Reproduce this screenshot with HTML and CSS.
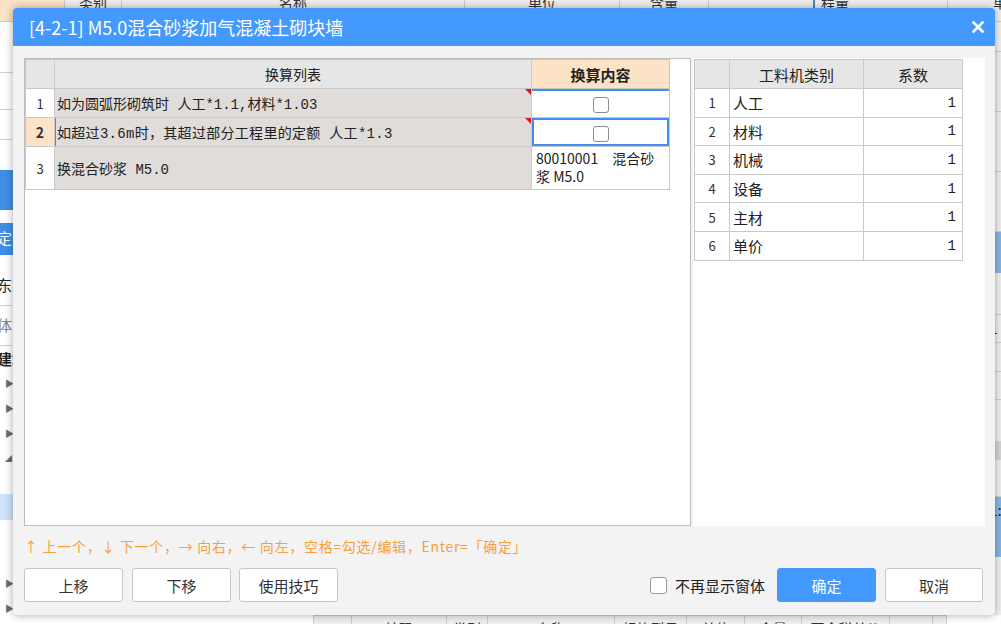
FILE: index.html
```html
<!DOCTYPE html>
<html lang="zh-CN">
<head>
<meta charset="utf-8">
<title>换算</title>
<link rel="stylesheet" href="styles.css">
</head>
<body>
<div class="app">
  <div class="app-head">
    <div class="ah ah-corner"></div>
    <div class="ah ah-type">类别</div>
    <div class="ah ah-name">名称</div>
    <div class="ah ah-unit">单位</div>
    <div class="ah ah-qty">含量</div>
    <div class="ah ah-amt">工程量</div>
    <div class="ah ah-price">单价</div>
  </div>
  <div class="app-mid">
    <div class="side">
      <div class="s-row s-orange"></div>
      <div class="s-row s-h50"></div>
      <div class="s-row s-h36"></div>
      <div class="s-row s-h30"></div>
      <div class="s-row s-h30 s-plain"></div>
      <div class="s-blue s-h40"></div>
      <div class="s-gap13"></div>
      <div class="s-blue s-h32 s-txt">定额</div>
      <div class="s-gap11"></div>
      <div class="s-row s-h40 s-txt s-dark">东管</div>
      <div class="s-row s-h40 s-txt s-grey">体系</div>
      <div class="s-row s-h25 s-txt s-bold s-plain">建筑</div>
      <div class="s-tri">▶</div>
      <div class="s-tri">▶</div>
      <div class="s-tri">▶</div>
      <div class="s-tri s-small">◢</div>
      <div class="s-gap23"></div>
      <div class="s-light"></div>
      <div class="s-gap51"></div>
      <div class="s-tri">▶</div>
      <div class="s-tri">▶</div>
    </div>
    <div class="center"></div>
    <div class="rstrip">
      <div class="r-row r-h30"></div>
      <div class="r-row r-h60"></div>
      <div class="r-row r-h60"></div>
      <div class="r-row r-h60"></div>
      <div class="r-blue r-h40"></div>
      <div class="r-row r-h42"></div>
      <div class="r-row r-h28 r-num">1</div>
      <div class="r-row r-h29"></div>
      <div class="r-row r-h28"></div>
      <div class="r-plain r-h41"></div>
      <div class="r-band"></div>
      <div class="r-row r-h37"></div>
      <div class="r-blue r-h60 r-num">1:</div>
    </div>
  </div>
  <div class="app-foot">
    <div class="af af-0"></div>
    <div class="af af-code">编码</div>
    <div class="af af-type">类别</div>
    <div class="af af-name">名称</div>
    <div class="af af-spec">规格型号</div>
    <div class="af af-unit">单位</div>
    <div class="af af-qty">含量</div>
    <div class="af af-price">不含税单价</div>
    <div class="af af-x"></div>
    <div class="af af-y"></div>
  </div>
</div>

<div class="dialog">
  <div class="dlg-title">
    <span class="dlg-caption">[4-2-1] M5.0混合砂浆加气混凝土砌块墙</span>
    <svg class="dlg-close" width="12" height="12" viewBox="0 0 12 12" aria-label="关闭">
      <path d="M1.5 1.5 L10.5 10.5 M10.5 1.5 L1.5 10.5" stroke="#ffffff" stroke-width="2.6" stroke-linecap="square" fill="none"/>
    </svg>
  </div>
  <div class="dlg-body">
    <div class="panels">
      <div class="panel panel-left">
        <table class="grid grid-left">
          <colgroup><col class="lc-num"><col class="lc-name"><col class="lc-val"></colgroup>
          <thead>
            <tr class="hrow">
              <th class="hnum"></th>
              <th>换算列表</th>
              <th class="hcur">换算内容</th>
            </tr>
          </thead>
          <tbody>
            <tr class="brow">
              <td class="num">1</td>
              <td class="desc"><span class="dtext">如为圆弧形砌筑时 人工*1.1,材料*1.03</span><i class="flag"></i></td>
              <td class="val val-top"><span class="box"></span></td>
            </tr>
            <tr class="brow">
              <td class="num num-cur">2</td>
              <td class="desc desc-cur"><span class="dtext">如超过3.6m时，其超过部分工程里的定额 人工*1.3</span><i class="flag"></i></td>
              <td class="val val-sel"><span class="box"></span></td>
            </tr>
            <tr class="brow brow-tall">
              <td class="num">3</td>
              <td class="desc"><span class="dtext">换混合砂浆 M5.0</span></td>
              <td class="val val-text">80010001　混合砂浆 M5.0</td>
            </tr>
          </tbody>
        </table>
      </div>
      <div class="panel panel-right">
        <table class="grid grid-right">
          <colgroup><col class="rc-num"><col class="rc-name"><col class="rc-val"></colgroup>
          <thead>
            <tr class="hrow"><th class="hnum"></th><th>工料机类别</th><th>系数</th></tr>
          </thead>
          <tbody>
            <tr class="rrow"><td class="num">1</td><td class="cat">人工</td><td class="coef">1</td></tr>
            <tr class="rrow"><td class="num">2</td><td class="cat">材料</td><td class="coef">1</td></tr>
            <tr class="rrow"><td class="num">3</td><td class="cat">机械</td><td class="coef">1</td></tr>
            <tr class="rrow"><td class="num">4</td><td class="cat">设备</td><td class="coef">1</td></tr>
            <tr class="rrow"><td class="num">5</td><td class="cat">主材</td><td class="coef">1</td></tr>
            <tr class="rrow"><td class="num">6</td><td class="cat">单价</td><td class="coef">1</td></tr>
          </tbody>
        </table>
      </div>
    </div>
    <div class="hint">↑ 上一个，↓ 下一个，→ 向右，← 向左，空格=勾选/编辑，Enter=「确定」</div>
    <div class="actions">
      <div class="btn-group">
        <button class="btn">上移</button>
        <button class="btn btn-down">下移</button>
        <button class="btn">使用技巧</button>
      </div>
      <div class="btn-group btn-group-right">
        <label class="chk-label"><span class="chk"></span>不再显示窗体</label>
        <button class="btn btn-primary">确定</button>
        <button class="btn btn-cancel">取消</button>
      </div>
    </div>
  </div>
</div>
</body>
</html>
```

FILE: styles.css
```css
* { box-sizing: border-box; margin: 0; padding: 0; }

body {
  width: 1001px;
  height: 624px;
  overflow: hidden;
  position: relative;
  background: #ffffff;
  font-family: "Noto Sans CJK SC", sans-serif;
  font-size: 13px;
  color: #222;
}

/* ---------- background application ---------- */
.app { display: flex; flex-direction: column; }

.app-head {
  display: flex;
  flex: none;
  height: 32px;
  margin-top: -10px;
  background: #efefef;
  border-bottom: 1px solid #cfcfcf;
}
.ah {
  flex: none;
  border-right: 1px solid #cdcdcd;
  text-align: center;
  line-height: 24px;
  font-size: 14px;
  color: #333;
}
.ah-corner { width: 65px; background: #fbe3c7; }
.ah-type { width: 57px; }
.ah-name { width: 343px; }
.ah-unit { width: 155px; }
.ah-qty { width: 89px; }
.ah-amt { width: 239px; }
.ah-price { width: 100px; text-align: left; padding-left: 45px; border-right: 0; }

.app-mid { display: flex; height: 593px; flex: none; }
.side { width: 40px; flex: none; display: flex; flex-direction: column; background: #fff; }
.s-row { border-bottom: 1px solid #cfcfcf; flex: none; }
.s-plain { border-bottom: 0; }
.s-orange { height: 0; border: 0; }
.s-h50 { height: 51px; }
.s-h36 { height: 37px; }
.s-h30 { height: 30px; }
.s-h40 { height: 40px; }
.s-h32 { height: 32px; }
.s-h25 { height: 25px; }
.s-blue { background: #3f8fe5; flex: none; }
.s-gap13 { height: 13px; flex: none; }
.s-gap11 { height: 11px; flex: none; }
.s-gap23 { height: 23px; flex: none; }
.s-gap51 { height: 51px; flex: none; }
.s-txt { font-size: 15px; line-height: 30px; white-space: nowrap; overflow: hidden; padding-left: 0; margin-left: -3px; }
.s-blue.s-txt { color: #fff; }
.s-dark { color: #222; line-height: 38px; }
.s-grey { color: #888; line-height: 38px; }
.s-bold { font-weight: bold; line-height: 25px; }
.s-tri { height: 25px; flex: none; font-size: 9px; line-height: 25px; color: #6d6d6d; padding-left: 5px; }
.s-small { font-size: 7px; }
.s-light { height: 26px; background: #cfe4fa; flex: none; }

.center { flex: 1; background: #fff; }

.rstrip { width: 12px; flex: none; display: flex; flex-direction: column; background: #f1f1f1; }
.r-row { border-bottom: 1px solid #d0d0d0; flex: none; }
.r-plain { flex: none; }
.r-h30 { height: 30px; }
.r-h60 { height: 60px; }
.r-h40 { height: 41px; }
.r-h42 { height: 42px; }
.r-h28 { height: 28px; }
.r-h29 { height: 29px; }
.r-h41 { height: 41px; }
.r-h37 { height: 37px; }
.r-blue { background: #86b7e8; flex: none; }
.r-band { height: 19px; background: #d6d6d6; flex: none; }
.r-num { font-size: 14px; line-height: 26px; padding-left: 1px; color: #222; }

.app-foot {
  display: flex;
  flex: none;
  height: 24px;
  padding-left: 313px;
  background: #fff;
}
.af {
  flex: none;
  background: #efefef;
  border-top: 1px solid #cfcfcf;
  border-right: 1px solid #cdcdcd;
  text-align: center;
  font-size: 14px;
  line-height: 24px;
  color: #333;
}
.af-0 { width: 39px; border-left: 1px solid #cdcdcd; }
.af-code { width: 95px; }
.af-type { width: 41px; }
.af-name { width: 127px; }
.af-spec { width: 72px; }
.af-unit { width: 58px; }
.af-qty { width: 57px; }
.af-price { width: 88px; }
.af-x { width: 43px; }
.af-y { width: 14px; }

/* ---------- dialog ---------- */
.dialog {
  position: absolute;
  left: 13px;
  top: 8px;
  width: 982px;
  height: 607px;
  background: #f3f3f3;
  border-radius: 4px;
  overflow: hidden;
  box-shadow: 0 0 9px rgba(0, 0, 0, 0.35);
  display: flex;
  flex-direction: column;
}

.dlg-title {
  height: 38px;
  flex: none;
  background: #4499ff;
  color: #ffffff;
  display: flex;
  align-items: center;
  justify-content: space-between;
  padding: 0 11px 0 16px;
}
.dlg-caption { font-size: 18px; }
.dlg-close { display: block; }

.dlg-body {
  flex: 1;
  display: flex;
  flex-direction: column;
  padding: 12px 10px 0 11px;
}

.panels { display: flex; gap: 2px; height: 468px; flex: none; }
.panel { background: #fff; }
.panel-left { width: 667px; border: 1px solid #bdbdbd; }
.panel-right { flex: 1; padding: 1px 0 0 1px; }

.grid {
  border-collapse: collapse;
  table-layout: fixed;
}
.grid th, .grid td {
  border: 1px solid #c9c9c9;
  padding: 0;
  overflow: hidden;
  white-space: nowrap;
}
.grid th {
  background: #e6e6e6;
  font-weight: normal;
  font-size: 14px;
  color: #222;
  text-align: center;
}
.grid .hcur { background: #fde3c5; font-weight: bold; font-size: 15px; }

.grid-left { width: 645px; }
.lc-num { width: 29px; }
.lc-name { width: 477px; }
.lc-val { width: 138px; }
.grid-left .hrow { height: 29px; }
.brow { height: 29px; }
.brow-tall { height: 43px; }

.num {
  background: #fff;
  text-align: center;
  font-size: 13px;
  color: #333;
}
.num-cur { background: #fde3c5; font-weight: bold; font-size: 14px; }

.desc {
  background: #e0dcd9;
  position: relative;
  padding-left: 2px !important;
  font-family: "Liberation Mono", "Noto Sans CJK SC", monospace;
  font-size: 14px;
  color: #222;
}
.desc-cur { box-shadow: inset 1px 0 0 #3e8ff0; }
.desc-cur .dtext { letter-spacing: 0.3px; }
.flag {
  position: absolute;
  right: 0;
  top: 0;
  width: 0;
  height: 0;
  border-top: 6px solid #e8101c;
  border-left: 6px solid transparent;
}

.val { background: #fff; text-align: center; }
.val-top { box-shadow: inset 0 2px 0 #3e8ff0; }
.val-sel { box-shadow: inset 0 0 0 2px #3e8ff0; }
.box {
  display: inline-block;
  width: 16px;
  height: 16px;
  border: 1px solid #8c8c8c;
  border-radius: 3px;
  background: #fff;
  vertical-align: middle;
}
.val-text {
  text-align: left;
  white-space: normal !important;
  font-size: 14px;
  line-height: 18px;
  padding: 2px 3px 0 4px !important;
  vertical-align: top;
  color: #222;
}

.grid-right { width: 269px; }
.rc-num { width: 35px; }
.rc-name { width: 134px; }
.rc-val { width: 99px; }
.grid-right .hrow { height: 29px; }
.grid-right th { font-size: 15px; }
.rrow { height: 28.6px; }
.cat { font-size: 15px; padding-left: 3px !important; color: #222; }
.coef { text-align: right; padding-right: 6px !important; font-size: 14px; color: #222; font-family: "Liberation Mono", "Noto Sans CJK SC", monospace; }

.hint {
  height: 40px;
  flex: none;
  display: flex;
  align-items: center;
  font-size: 14px;
  letter-spacing: 0.7px;
  color: #f7a03a;
  white-space: nowrap;
}

.actions {
  margin-top: 2px;
  height: 34px;
  flex: none;
  display: flex;
  justify-content: space-between;
  padding-right: 2px;
}
.btn-group { display: flex; align-items: center; gap: 9px; }
.btn-group-right { gap: 0; }
.btn {
  width: 99px;
  height: 34px;
  background: #fff;
  border: 1px solid #c6c6c6;
  border-radius: 3px;
  font-family: "Noto Sans CJK SC", sans-serif;
  font-size: 15px;
  color: #333;
}
.btn-down { margin-right: -1px; }
.btn-primary { background: #4499ff; border-color: #4499ff; color: #fff; }
.btn-cancel { margin-left: 9px; width: 98px; }

.chk-label {
  display: flex;
  align-items: center;
  gap: 8px;
  font-size: 15px;
  color: #222;
  margin-right: 12px;
}
.chk {
  width: 17px;
  height: 17px;
  border: 1px solid #999;
  border-radius: 3px;
  background: #fff;
}
```
